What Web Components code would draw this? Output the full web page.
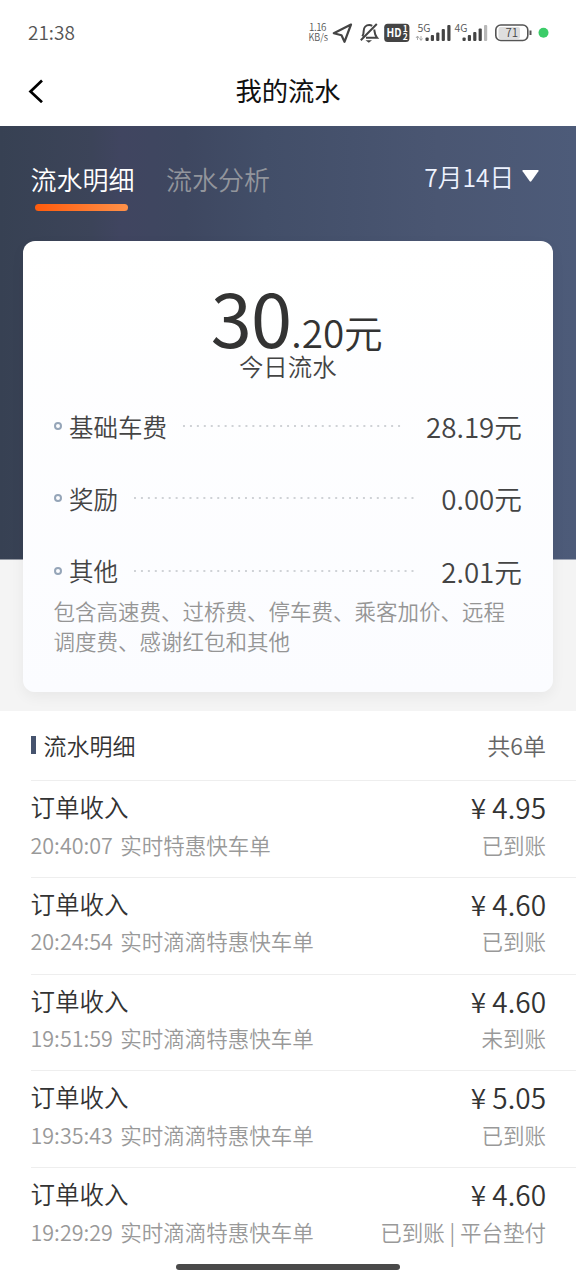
<!DOCTYPE html>
<html lang="zh-CN">
<head>
<meta charset="utf-8">
<title>我的流水</title>
<style>
html,body{margin:0;padding:0;background:#fff}
body{width:576px;height:1280px;overflow:hidden;font-family:"Noto Sans CJK SC","Noto Sans",sans-serif;font-weight:350;color:#333}
</style>
</head>
<body>
<income-page></income-page>
<script>
const define = (name, html, setup) => {
  const t = document.createElement('template');
  t.innerHTML = html;
  customElements.define(name, class extends HTMLElement {
    constructor() {
      super();
      this.attachShadow({mode: 'open'}).append(t.content.cloneNode(true));
    }
    connectedCallback() { if (setup) setup(this, this.shadowRoot); }
  });
};

define('status-bar', `
<style>
:host{display:flex;box-sizing:border-box;height:64px;padding:0 24px 0 28px;align-items:center;justify-content:space-between;color:#555}
.time{font-size:19px;line-height:30px;margin-top:-1px}
svg{display:block;width:246px;height:30px}
text{font-family:"Noto Sans CJK SC",sans-serif}
</style>
<span class="time">21:38</span>
<svg viewBox="306 17 246 30" fill="none">
  <text x="309" y="31" font-size="9.800" fill="#555" textLength="17.500">1.16</text>
  <text x="308.500" y="41.300" font-size="9.800" fill="#555" textLength="19.500" lengthAdjust="spacingAndGlyphs">KB/s</text>
  <path d="M351 24.500 333.800 33.300l7.700 2 3 6.500z" stroke="#444" stroke-width="2.200" stroke-linejoin="round"/>
  <path d="M362.300 36.300c1.200-1.500 1.400-3 1.400-5.500 0-3.500 2.300-5.800 5.500-5.800 1.200 0 2.200.3 3 .8M374.300 29.500c.4 3.500.2 5.500 2.700 8.200H366M360.800 40.300 376.800 24" stroke="#444" stroke-width="2"/>
  <path d="M365.500 40.200h6.500l-3.200 2.600z" fill="#444"/>
  <rect x="384.200" y="23.700" width="25.200" height="18.200" rx="3.500" fill="#444"/>
  <text x="386.500" y="37.200" font-size="12" font-weight="700" fill="#fff" textLength="15" lengthAdjust="spacingAndGlyphs">HD</text>
  <text x="402.800" y="32" font-size="8.500" font-weight="700" fill="#fff">1</text>
  <text x="402.800" y="40.300" font-size="8.500" font-weight="700" fill="#fff">2</text>
  <text x="417.500" y="31.500" font-size="10.500" fill="#555" textLength="13" lengthAdjust="spacingAndGlyphs">5G</text>
  <path d="M417.500 36.500v3.500m-1.500-2 1.500-2 1.500 2M421 36v4m-1.500-1.800L421 40.500l1.500-2" stroke="#999" stroke-width=".8"/>
  <g fill="#444"><rect x="425.500" y="37.500" width="3.200" height="3.500" rx="1"/><rect x="430.800" y="35" width="3.200" height="6" rx="1"/><rect x="436.200" y="32.500" width="3.200" height="8.500" rx="1"/><rect x="441.700" y="29" width="3.200" height="12" rx="1"/><rect x="447.300" y="25" width="3.200" height="16" rx="1"/></g>
  <text x="454.500" y="31.500" font-size="10.500" fill="#555" textLength="13" lengthAdjust="spacingAndGlyphs">4G</text>
  <g fill="#444"><rect x="462.500" y="37.500" width="3.200" height="3.500" rx="1"/><rect x="467.800" y="35" width="3.200" height="6" rx="1"/><rect x="473.200" y="32" width="3.200" height="9" rx="1"/><rect x="478.600" y="28.500" width="3.200" height="12.500" rx="1"/></g>
  <rect x="484" y="25" width="3.200" height="16" rx="1" fill="#b8b8b8"/>
  <rect x="498.500" y="27" width="21.500" height="12" rx="2" fill="#dedede"/>
  <rect x="495.800" y="25" width="32" height="15.500" rx="5" stroke="#555" stroke-width="1.600"/>
  <path d="M530.500 30.500v4.500" stroke="#555" stroke-width="2"/>
  <text x="505.500" y="37" font-size="11.500" fill="#444">71</text>
  <circle cx="543.500" cy="32.800" r="5" fill="#3bcc68"/>
</svg>`);

define('title-bar', `
<style>
:host{display:grid;box-sizing:border-box;height:62px;grid-template-columns:60px 1fr 60px;align-items:center;padding:0 0 9px;color:#111}
svg{display:block;margin-left:28px;width:16px;height:24px}
.t{text-align:center;font-size:26.300px;line-height:38px;font-weight:400;font-family:"KaiTi","STKaiti","Noto Sans CJK SC",sans-serif;margin-top:-1px}
</style>
<svg viewBox="0 0 16 24" fill="none" stroke="#000" stroke-width="2.700"><path d="M14 1.500 2.500 12.500 14 23.200"/></svg>
<div class="t"><slot></slot></div>`);

define('tab-item', `
<style>
:host{display:flex;flex-direction:column;align-items:center;width:104px;color:#92959c;font-size:26px;line-height:38px;white-space:nowrap}
i{display:none;width:93px;height:7px;border-radius:4px;margin:6px 2px 0 0;background:linear-gradient(90deg,#ff5b0c,#ff9149)}
:host([active]){color:#fff}
:host([active]) i{display:block}
</style>
<span><slot></slot></span><i></i>`);

define('date-picker', `
<style>
:host{display:flex;align-items:center;gap:8px;color:#eef3ff;font-size:24.600px;line-height:38px}
svg{display:block;width:17px;height:12px;margin-top:-1px}
</style>
<span><slot></slot></span><svg viewBox="0 0 17 12"><path d="M1 0h15q1 .3.400 1.200L9.300 11.300q-.8.800-1.600 0L.600 1.200Q0 .3 1 0z" fill="#fff"/></svg>`);

define('fee-row', `
<style>
:host{display:flex;align-items:center;height:40px;color:#444}
.dot{box-sizing:border-box;width:8px;height:8px;border:2px solid #95a5b8;border-radius:50%;margin-right:7.500px;position:relative;top:-1px}
.l{font-size:24.500px;line-height:40px;margin-top:-1px}
.line{flex:1;height:2px;margin:0 24px 0 16px;position:relative;top:-1px;background:radial-gradient(circle at 1px 1px,#cfd2d6 .9px,transparent 1.200px) 0 0/6.950px 2px repeat-x}
.v{font-size:27.700px;line-height:40px;margin-top:-2px}
</style>
<span class="dot"></span><span class="l"><slot></slot></span><span class="line"></span><span class="v"><slot name="value"></slot></span>`);

define('summary-card', `
<style>
:host{display:block;box-sizing:border-box;width:530.500px;height:451px;padding:37px 31px 0;border-radius:12px;background:linear-gradient(180deg,#fff,#fbfcff);box-shadow:0 5px 14px rgba(0,0,0,.05)}
.total{display:flex;justify-content:center;align-items:baseline;height:76px;line-height:75px;color:#333;padding-left:18px}
.big{font-size:74px;letter-spacing:-.8px;font-weight:400}
.small{font-size:38.700px}
.sub{font-size:24.400px;line-height:26px;text-align:center;color:#444;margin-top:-1px}
.rows{display:flex;flex-direction:column;gap:32.300px;margin-top:28px}
p{margin:4px 0 0;font-size:21.500px;line-height:30px;color:#959595;white-space:nowrap}
</style>
<div class="total"><span class="big">30</span><span class="small">.20元</span></div>
<div class="sub">今日流水</div>
<div class="rows"><slot></slot></div>
<p>包含高速费、过桥费、停车费、乘客加价、远程<br>调度费、感谢红包和其他</p>`);

define('hero-panel', `
<style>
:host{display:block;box-sizing:border-box;height:585px;padding:34px 22.500px 0;background:linear-gradient(90deg,#374153 0,#3c4459 16%,#404560 21%,#3e4760 32%,#424e68 46%,#4a5672 76%,#4d5b79 100%) 0 0/100% 433.500px no-repeat #f4f4f4}
.bar{display:flex;height:81px;align-items:flex-start;padding:0 14.500px 0 8px}
.gap{width:31.500px}
date-picker{margin-left:auto;margin-top:-3px}
</style>
<div class="bar"><tab-item active>流水明细</tab-item><span class="gap"></span><tab-item>流水分析</tab-item><date-picker>7月14日</date-picker></div>
<slot></slot>`);

define('list-head', `
<style>
:host{display:flex;align-items:center;height:69px;padding-right:30px;font-size:23px;line-height:34px}
i{width:5px;height:18px;background:#46536e;margin-right:8px;position:relative;top:-1px}
span{margin-top:-2px}
.n{margin-left:auto;color:#666}
</style>
<i></i><span><slot></slot></span><span class="n"><slot name="count"></slot></span>`);

define('order-row', `
<style>
:host{display:grid;box-sizing:border-box;height:96.800px;border-top:1px solid #eee;padding:8px 30px 0 0;grid-template-columns:1fr auto;grid-template-rows:36px 36px;line-height:36px;row-gap:1.500px}
.t{font-size:24.500px}
.a{font-size:28px;text-align:right}
.d,.s{font-size:21.500px;color:#999;white-space:nowrap}
.d{word-spacing:2.500px}
.s{text-align:right}
</style>
<span class="t">订单收入</span><span class="a"></span><span class="d"></span><span class="s"></span>`,
(el, root) => {
  root.querySelector('.a').textContent = '¥ ' + el.getAttribute('amount');
  root.querySelector('.d').textContent = el.getAttribute('detail');
  root.querySelector('.s').textContent = el.getAttribute('state');
});

define('home-indicator', `
<style>:host{display:block;position:absolute;left:176px;top:1264px;width:224px;height:6px;border-radius:3px;background:#4a4a4a}</style>`);

define('income-page', `
<style>
:host{display:block;position:relative;width:576px;height:1280px;overflow:hidden;background:#fff}
.list{padding-left:30.500px}
</style>
<status-bar></status-bar>
<title-bar>我的流水</title-bar>
<hero-panel><summary-card>
<fee-row>基础车费<span slot="value">28.19元</span></fee-row>
<fee-row>奖励<span slot="value">0.00元</span></fee-row>
<fee-row>其他<span slot="value">2.01元</span></fee-row>
</summary-card></hero-panel>
<div class="list">
<list-head>流水明细<span slot="count">共6单</span></list-head>
<order-row amount="4.95" detail="20:40:07 实时特惠快车单" state="已到账"></order-row>
<order-row amount="4.60" detail="20:24:54 实时滴滴特惠快车单" state="已到账"></order-row>
<order-row amount="4.60" detail="19:51:59 实时滴滴特惠快车单" state="未到账"></order-row>
<order-row amount="5.05" detail="19:35:43 实时滴滴特惠快车单" state="已到账"></order-row>
<order-row amount="4.60" detail="19:29:29 实时滴滴特惠快车单" state="已到账 | 平台垫付"></order-row>
</div>
<home-indicator></home-indicator>`);
</script>
</body>
</html>
